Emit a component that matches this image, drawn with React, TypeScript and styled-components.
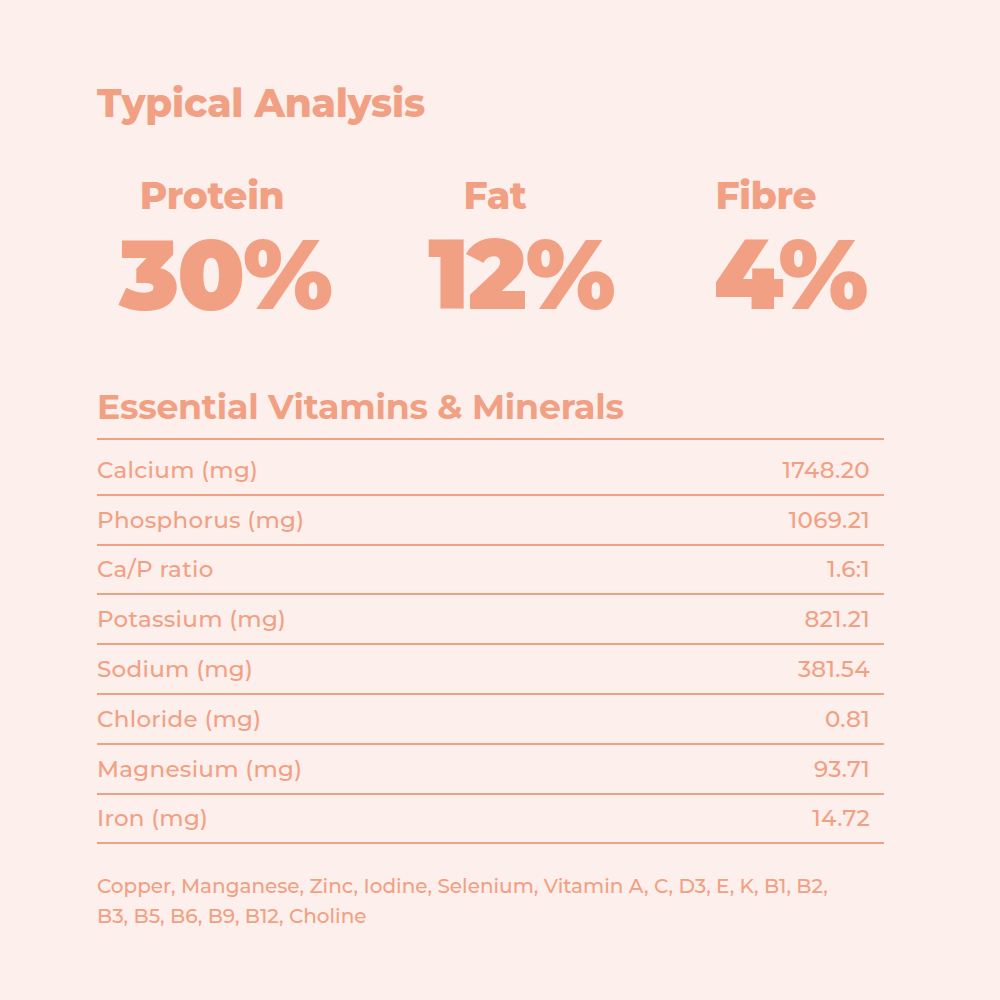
import React from "react";
import styled, { createGlobalStyle } from "styled-components";

const ACCENT = "#f1a083";

const Global = createGlobalStyle`
  html, body { margin: 0; padding: 0; background: #fdefeb; }
  body { font-family: "Montserrat", Inter, "Noto Sans", sans-serif; }
`;

const Page = styled.div`
  width: 1000px;
  height: 1000px;
  box-sizing: border-box;
  padding: 80px 116px 0 97px;
  background: #fdefeb;
  color: ${ACCENT};
`;

const Title = styled.h1`
  margin: 0;
  font-size: 38.8px;
  font-weight: 800;
  line-height: 46px;
  letter-spacing: -0.2px;
`;

const Stats = styled.div`
  display: grid;
  grid-template-columns: 256px 336px 202px;
  margin-top: 48px;
`;

const Stat = styled.div<{ $shift: number }>`
  display: flex;
  flex-direction: column;
  align-items: center;
  & > span:first-child { margin-right: ${(p) => p.$shift}px; }
`;

const Label = styled.span`
  font-size: 37.5px;
  font-weight: 800;
  line-height: 44px;
  letter-spacing: -0.3px;
`;

const Big = styled.span`
  font-size: 98px;
  font-weight: 900;
  line-height: 100px;
  letter-spacing: -2px;
  margin-top: 6px;
`;

const Heading = styled.h2`
  margin: 63px 0 0;
  font-size: 34.7px;
  font-weight: 700;
  line-height: 40px;
  letter-spacing: -0.2px;
`;

const Table = styled.div`
  margin-top: 11px;
  border-top: 2px solid ${ACCENT};
  padding-top: 6px;
`;

const Row = styled.div`
  display: flex;
  justify-content: space-between;
  align-items: center;
  height: 47.8px;
  padding-right: 14px;
  border-bottom: 2px solid ${ACCENT};
  font-size: 23px;
  font-weight: 500;
  letter-spacing: 0.3px;
`;

const Note = styled.p`
  margin: 27px 0 0;
  font-size: 20px;
  font-weight: 500;
  line-height: 30px;
  letter-spacing: 0;
  max-width: 745px;
`;

const stats = [
  { label: "Protein", value: "30%", shift: 26 },
  { label: "Fat", value: "12%", shift: 52 },
  { label: "Fibre", value: "4%", shift: 48 },
];

const rows: [string, string][] = [
  ["Calcium (mg)", "1748.20"],
  ["Phosphorus (mg)", "1069.21"],
  ["Ca/P ratio", "1.6:1"],
  ["Potassium (mg)", "821.21"],
  ["Sodium (mg)", "381.54"],
  ["Chloride (mg)", "0.81"],
  ["Magnesium (mg)", "93.71"],
  ["Iron (mg)", "14.72"],
];

export default function App() {
  return (
    <>
      <Global />
      <Page>
        <Title>Typical Analysis</Title>
        <Stats>
          {stats.map((s) => (
            <Stat key={s.label} $shift={s.shift}>
              <Label>{s.label}</Label>
              <Big>{s.value}</Big>
            </Stat>
          ))}
        </Stats>
        <Heading>Essential Vitamins &amp; Minerals</Heading>
        <Table>
          {rows.map(([k, v]) => (
            <Row key={k}>
              <span>{k}</span>
              <span>{v}</span>
            </Row>
          ))}
        </Table>
        <Note>
          Copper, Manganese, Zinc, Iodine, Selenium, Vitamin A, C, D3, E, K, B1, B2, B3, B5, B6, B9, B12, Choline
        </Note>
      </Page>
    </>
  );
}
